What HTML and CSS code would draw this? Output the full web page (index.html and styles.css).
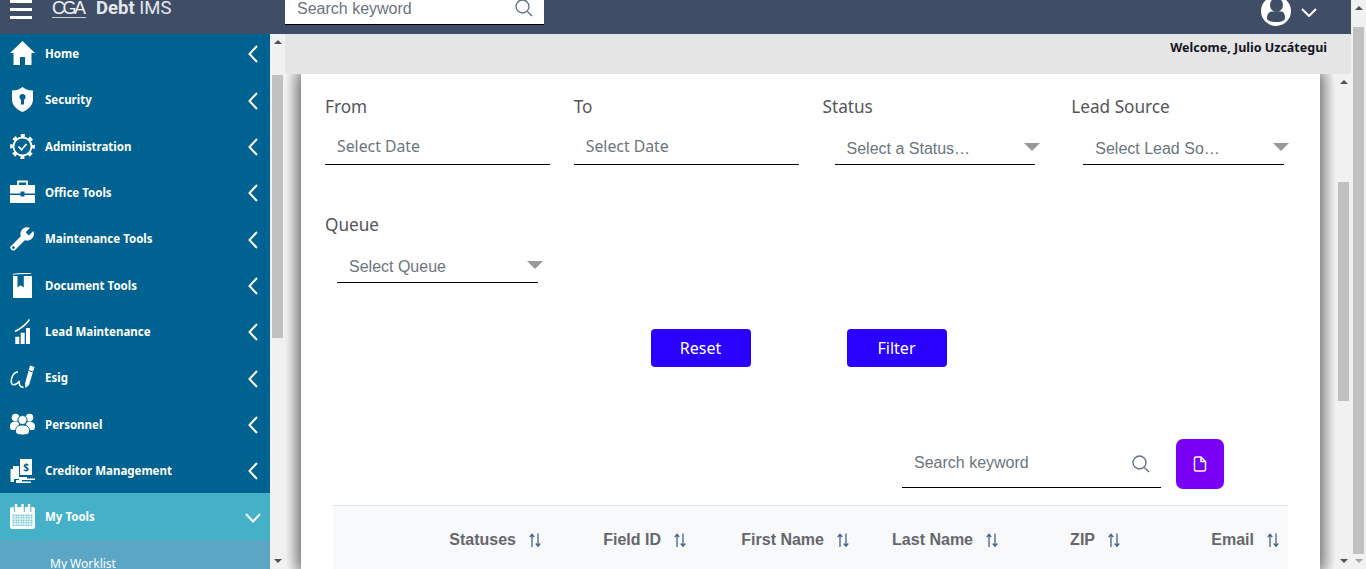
FILE: index.html
```html
<!DOCTYPE html>
<html>
    <head>
        <title>Debt IMS</title>
        <link rel="stylesheet" href="styles.css">
    </head>
    <body>
        <svg class="sprites" width="0" height="0">
            <symbol id="chev-left" viewBox="0 0 10 18"><path d="M9 1 1.500 9 9 17" fill="none" stroke="#fff" stroke-width="2"/></symbol>
            <symbol id="search" viewBox="0 0 18 18"><circle cx="7.500" cy="7.500" r="6.500" fill="none" stroke="#64748b" stroke-width="1.400"/><path d="M12.400 12.400 17 17" stroke="#64748b" stroke-width="1.400"/></symbol>
            <symbol id="sort" viewBox="0 0 12 14"><path d="M3 14V1.500M.8 4 3 1.200 5.200 4M9 .5V13M6.800 10.500 9 13.300l2.200-2.800" fill="none" stroke="#46608f" stroke-width="1.300"/></symbol>
        </svg>
        <div class="shell">
            <div class="main">
                <header class="topbar">
                    <div class="burger"><span></span><span></span><span></span></div>
                    <div class="logo">
                        <span class="logo-mark">CGA</span>
                        <span class="logo-line"></span>
                    </div>
                    <div class="brand"><b>Debt</b> IMS</div>
                    <div class="top-search">
                        <span>Search keyword</span>
                        <svg class="search-icon"><use href="#search"/></svg>
                    </div>
                    <svg class="avatar" viewBox="0 0 30 30">
                        <circle cx="15" cy="15" r="15" fill="#fff"/>
                        <ellipse cx="15.500" cy="9" rx="6.500" ry="7" fill="#3f4d67"/>
                        <path d="M6 22c0-5 3-6.500 5-6.500h9c2 0 4 1.500 4 6.500 0 2-2 4-9 4s-9-2-9-4z" fill="#3f4d67"/>
                    </svg>
                    <svg class="avatar-chev" viewBox="0 0 16 9"><path d="M1 1l7 7 7-7" fill="none" stroke="#fff" stroke-width="2"/></svg>
                </header>
                <div class="below">
                    <nav class="sidebar">
                        <a class="nav-item">
                            <svg class="nav-icon" viewBox="0 0 25 25"><path d="M12.500 0 25 12h-3.500v12h-6.500v-8H10v8H3.500V12H0z" fill="#fff"/></svg>
                            <span>Home</span>
                            <svg class="nav-chev"><use href="#chev-left"/></svg>
                        </a>
                        <a class="nav-item">
                            <svg class="nav-icon" viewBox="0 0 25 25"><path d="M12.500 0c3 2.500 6 3.500 10.500 3.500V12c0 6-4 10.500-10.500 13C6 22.500 2 18 2 12V3.500C6.500 3.500 9.500 2.500 12.500 0z" fill="#fff"/><circle cx="12.500" cy="10" r="3" fill="#006290"/><rect x="11" y="11" width="3" height="6.500" fill="#006290"/></svg>
                            <span>Security</span>
                            <svg class="nav-chev"><use href="#chev-left"/></svg>
                        </a>
                        <a class="nav-item">
                            <svg class="nav-icon" viewBox="0 0 25 25"><circle cx="12.500" cy="12.500" r="9" fill="none" stroke="#fff" stroke-width="1.800"/><circle cx="12.500" cy="12.500" r="10.800" fill="none" stroke="#fff" stroke-width="3.200" stroke-dasharray="4 4.480" stroke-dashoffset="2"/><path d="M8.500 12.500l3 3.200 5-5.700" fill="none" stroke="#fff" stroke-width="1.700"/></svg>
                            <span>Administration</span>
                            <svg class="nav-chev"><use href="#chev-left"/></svg>
                        </a>
                        <a class="nav-item">
                            <svg class="nav-icon" viewBox="0 0 25 25"><path d="M8 5V1.500h9V5" fill="none" stroke="#fff" stroke-width="1.800"/><path d="M0 5h25v8.500H14.500v-2h-4v2H0zM0 15h10.500v1.500h4V15H25v8H0z" fill="#fff"/></svg>
                            <span>Office Tools</span>
                            <svg class="nav-chev"><use href="#chev-left"/></svg>
                        </a>
                        <a class="nav-item">
                            <svg class="nav-icon" viewBox="0 0 24 24"><g transform="matrix(-1 0 0 1 24 0)"><path d="M22.700 19l-9.100-9.100c.9-2.300.4-5-1.500-6.900-2-2-5-2.400-7.400-1.300L9 6 6 9 1.600 4.700C.4 7.100.9 10.100 2.900 12.100c1.900 1.900 4.600 2.400 6.900 1.500l9.100 9.100c.4.4 1 .9 2 .9s3-2 3-3c0-.6-.8-1.300-1.200-1.600z" fill="#fff"/><circle cx="20.700" cy="20.700" r="1.300" fill="#006290"/></g></svg>
                            <span>Maintenance Tools</span>
                            <svg class="nav-chev"><use href="#chev-left"/></svg>
                        </a>
                        <a class="nav-item">
                            <svg class="nav-icon" viewBox="0 0 25 25"><path d="M3 1.500C4 .5 20 .5 21 .5" fill="none" stroke="#fff" stroke-width="1.200"/><path d="M3 3h19v22H4a1 1 0 0 1-1-1zM7.500 3v11.500l3-2.300 3.300 2.300V3z" fill="#fff" fill-rule="evenodd"/></svg>
                            <span>Document Tools</span>
                            <svg class="nav-chev"><use href="#chev-left"/></svg>
                        </a>
                        <a class="nav-item">
                            <svg class="nav-icon" viewBox="0 0 25 25"><path d="M5.300 17.700h4v7.300h-4zM10.700 13.700h4V25h-4zM16 9h4v16h-4z" fill="#fff"/><path d="M5 12.500C10 10 15 7 19.500 .5" fill="none" stroke="#fff" stroke-width="1.500"/></svg>
                            <span>Lead Maintenance</span>
                            <svg class="nav-chev"><use href="#chev-left"/></svg>
                        </a>
                        <a class="nav-item">
                            <svg class="nav-icon" viewBox="0 0 25 25"><path d="M8 7C3 7 .5 14 1.500 18c1 3 5 2 8-2-1 3 1 7 4 6" fill="none" stroke="#fff" stroke-width="1.600"/><path d="M20 .5l4.500 1.500-5.500 18-3.500 3-.5-4.500z" fill="#fff"/><path d="M18.800 5.500l4.500 1.500" stroke="#006290"/></svg>
                            <span>Esig</span>
                            <svg class="nav-chev"><use href="#chev-left"/></svg>
                        </a>
                        <a class="nav-item">
                            <svg class="nav-icon" viewBox="0 0 25 25"><circle cx="5.500" cy="5.500" r="3.800" fill="#fff"/><circle cx="19.500" cy="5.500" r="3.800" fill="#fff"/><path d="M0 14c0-3 2-4.500 5.500-4.500S9 11 9 14v4H2c-1.500 0-2-2-2-4zM16 14c0-3 1-4.500 3.500-4.500S25 11 25 14c0 2-.5 4-2 4h-7z" fill="#fff"/><circle cx="12.500" cy="8" r="4.500" fill="#fff" stroke="#006290"/><path d="M5.500 19c0-4 2.500-6 7-6s7 2 7 6c0 3-3 4-7 4s-7-1-7-4z" fill="#fff" stroke="#006290"/></svg>
                            <span>Personnel</span>
                            <svg class="nav-chev"><use href="#chev-left"/></svg>
                        </a>
                        <a class="nav-item">
                            <svg class="nav-icon" viewBox="0 0 25 25"><path d="M10 1h12v16H10z" fill="#fff"/><text class="dollar" x="16" y="12.500">$</text><path d="M3 8h6v13H4v3H.5V11H3z" fill="#fff"/><path d="M9 19h8v1.500h8V22H12v1.500h9V25H6v-3h3z" fill="#fff"/></svg>
                            <span>Creditor Management</span>
                            <svg class="nav-chev"><use href="#chev-left"/></svg>
                        </a>
                        <a class="nav-item active">
                            <svg class="nav-icon" viewBox="0 0 25 25">
                                <defs><pattern id="cal-grid" width="2.500" height="2.500" patternUnits="userSpaceOnUse"><rect width="2.500" height="2.500" fill="#fff"/><rect x=".5" y=".5" width="1.500" height="1.500" fill="#44b1c9"/></pattern></defs>
                                <rect y="3" width="25" height="22" rx="2" fill="#fff"/>
                                <rect x="2" y="10" width="21" height="12" fill="url(#cal-grid)"/>
                                <path d="M6 0v7M12.500 0v7M19 0v7" stroke="#fff" stroke-width="2.400"/>
                                <path d="M4.300 3v5M14.300 3v5M20.800 3v5" stroke="#44b1c9" stroke-width="1"/>
                            </svg>
                            <span>My Tools</span>
                            <svg class="nav-down" viewBox="0 0 16 10"><path d="M1 1l7 7.500L15 1" fill="none" stroke="#fff" stroke-width="2"/></svg>
                        </a>
                        <a class="nav-sub">My Worklist</a>
                    </nav>
                    <div class="scrollbar side-scroll">
                        <span class="arrow-up"></span>
                        <span class="thumb"></span>
                        <span class="arrow-down"></span>
                    </div>
                    <div class="content">
                        <div class="welcome">Welcome, Julio Uzcátegui</div>
                        <div class="content-row">
                            <main class="card">
                                <section class="filters">
                                    <div class="field">
                                        <label>From</label>
                                        <div class="date-input">Select Date</div>
                                    </div>
                                    <div class="field">
                                        <label>To</label>
                                        <div class="date-input">Select Date</div>
                                    </div>
                                    <div class="field">
                                        <label>Status</label>
                                        <div class="select-input"><span>Select a Status…</span><i class="caret"></i></div>
                                    </div>
                                    <div class="field">
                                        <label>Lead Source</label>
                                        <div class="select-input"><span>Select Lead So…</span><i class="caret"></i></div>
                                    </div>
                                    <div class="field">
                                        <label>Queue</label>
                                        <div class="select-input"><span>Select Queue</span><i class="caret"></i></div>
                                    </div>
                                </section>
                                <div class="actions">
                                    <button class="btn">Reset</button>
                                    <button class="btn">Filter</button>
                                </div>
                                <div class="table-tools">
                                    <div class="table-search">
                                        <span>Search keyword</span>
                                        <svg class="search-icon"><use href="#search"/></svg>
                                    </div>
                                    <button class="export-btn">
                                        <svg viewBox="0 0 14 16" width="14" height="16"><path d="M1.500 2.500a1.500 1.500 0 0 1 1.500-1.500h5l4.500 4.500v8a1.500 1.500 0 0 1-1.500 1.500H3a1.500 1.500 0 0 1-1.500-1.500zM8 1v4.500h4.500" fill="none" stroke="#fff" stroke-width="1.500"/></svg>
                                    </button>
                                </div>
                                <div class="table-head">
                                    <div class="th"><span>Statuses</span><svg class="sort"><use href="#sort"/></svg></div>
                                    <div class="th"><span>Field ID</span><svg class="sort"><use href="#sort"/></svg></div>
                                    <div class="th"><span>First Name</span><svg class="sort"><use href="#sort"/></svg></div>
                                    <div class="th"><span>Last Name</span><svg class="sort"><use href="#sort"/></svg></div>
                                    <div class="th"><span>ZIP</span><svg class="sort"><use href="#sort"/></svg></div>
                                    <div class="th"><span>Email</span><svg class="sort"><use href="#sort"/></svg></div>
                                </div>
                            </main>
                            <div class="scrollbar inner-scroll">
                                <span class="arrow-up"></span>
                                <span class="thumb"></span>
                                <span class="arrow-down"></span>
                            </div>
                        </div>
                    </div>
                </div>
            </div>
            <div class="scrollbar page-scroll">
                <span class="arrow-up"></span>
                <span class="thumb"></span>
                <span class="arrow-down faded"></span>
            </div>
        </div>
    </body>
</html>
```

FILE: styles.css
```css
html, body {
    height: 100%;
}
body {
    margin: 0;
    overflow: hidden;
    background: #fff;
    font-family: "Noto Sans", Arial, sans-serif;
}
.sprites {
    display: block;
    height: 0;
}
.shell {
    display: flex;
    height: 569px;
    overflow: hidden;
}
.main {
    flex: 1;
    min-width: 0;
    display: flex;
    flex-direction: column;
}

/* top bar */
.topbar {
    flex: none;
    height: 34px;
    background-color: #3f4d67;
    display: flex;
    align-items: flex-start;
    overflow: hidden;
}
.burger {
    width: 22px;
    margin-left: 10px;
    display: flex;
    flex-direction: column;
    gap: 5px;
}
.burger span {
    height: 3px;
    background: #fff;
}
.logo {
    width: 34px;
    margin-left: 20px;
    display: flex;
    flex-direction: column;
}
.logo-mark {
    font-family: "Liberation Sans", sans-serif;
    font-size: 18px;
    line-height: 17px;
    letter-spacing: -2.5px;
    color: #f2f4f7;
}
.logo-line {
    height: 1px;
    background: #c9ced8;
}
.brand {
    margin-left: 10px;
    width: 189px;
    font-family: Roboto, sans-serif;
    font-size: 18.5px;
    line-height: 17px;
    color: #e4e7ec;
}
.brand b {
    font-weight: 700;
}
.top-search {
    width: 259px;
    height: 25px;
    box-sizing: border-box;
    padding: 0 11px 0 12px;
    background: #fff;
    border-bottom: 1px solid #000;
    display: flex;
    justify-content: space-between;
    align-items: flex-start;
    font-family: "Liberation Sans", sans-serif;
    font-size: 16px;
    line-height: 17px;
    color: #6c757d;
}
.search-icon {
    width: 18px;
    height: 18px;
}
.top-search .search-icon {
    margin: -1px 0 0 0;
}
.avatar {
    width: 30px;
    height: 30px;
    margin: -4px 0 0 717px;
}
.avatar-chev {
    width: 16px;
    height: 9px;
    margin: 8px 0 0 10px;
}

/* sidebar */
.below {
    flex: 1;
    min-height: 0;
    display: flex;
}
.sidebar {
    flex: none;
    width: 270px;
    overflow: hidden;
    background-color: #006290;
}
.nav-item {
    height: 46.33px;
    display: flex;
    align-items: center;
    color: #fff;
    font-size: 11.5px;
    font-weight: 700;
}
.nav-item:first-child {
    margin-top: -3.7px;
}
.nav-item span {
    flex: 1;
}
.nav-item.active {
    height: 47px;
    margin-top: -0.3px;
    background-color: #44b1c9;
}
.nav-icon {
    width: 25px;
    height: 25px;
    margin: 0 10px;
}
.dollar {
    font-family: "Noto Sans", sans-serif;
    font-size: 10px;
    font-weight: 700;
    text-anchor: middle;
    fill: #006290;
}
.nav-chev {
    width: 10px;
    height: 18px;
    margin: 2px 12px 0 0;
}
.nav-down {
    width: 16px;
    height: 10px;
    margin: 2px 9px 0 0;
}
.nav-sub {
    display: block;
    height: 46px;
    padding: 15px 0 0 50px;
    box-sizing: border-box;
    background-color: #5ba5c5;
    color: #fff;
    font-size: 12px;
    line-height: 18px;
}

/* fake scrollbars, they are part of the shot */
.scrollbar {
    flex: none;
    width: 15px;
    box-sizing: border-box;
    padding: 0 2px;
    background-color: #f1f1f1;
    display: flex;
    flex-direction: column;
    align-items: center;
}
.thumb {
    width: 11px;
    background-color: #c1c1c1;
}
.arrow-up, .arrow-down {
    flex: none;
    width: 0;
    height: 0;
    border-left: 4px solid transparent;
    border-right: 4px solid transparent;
}
.arrow-up {
    border-bottom: 4px solid #505050;
    margin-top: 6px;
}
.arrow-down {
    border-top: 4px solid #505050;
    margin-top: auto;
    margin-bottom: 6px;
}
.arrow-down.faded {
    border-top-color: #a3a3a3;
}
.page-scroll .thumb {
    margin-top: 17px;
    height: 527px;
}
.side-scroll .thumb {
    margin-top: 31px;
    height: 263px;
}
.inner-scroll .thumb {
    margin-top: 98px;
    height: 219px;
}

/* content */
.content {
    flex: 1;
    min-width: 0;
    display: flex;
    flex-direction: column;
}
.welcome {
    flex: none;
    height: 40px;
    box-sizing: border-box;
    padding: 5px 24px 0 0;
    background-color: #e5e5e5;
    text-align: right;
    font-size: 12.5px;
    line-height: 17px;
    font-weight: 700;
    color: #14141e;
}
.content-row {
    flex: 1;
    min-height: 0;
    display: flex;
}
.card {
    flex: 1;
    min-width: 0;
    margin: 0 16px;
    background: #fff;
    box-shadow: 0 0 16px 5px rgba(0, 0, 0, 0.6);
    clip-path: inset(0 -16px 0 -16px);
}

/* filters */
.filters {
    display: grid;
    grid-template-columns: repeat(4, 1fr);
    row-gap: 47px;
    padding: 20px 12px 0;
}
.field {
    height: 71px;
    padding: 0 12px;
    display: flex;
    flex-direction: column;
}
.field label {
    height: 24px;
    font-size: 17.2px;
    line-height: 26px;
    color: #55555a;
}
.date-input {
    height: 47px;
    box-sizing: border-box;
    padding: 16px 0 0 12px;
    border-bottom: 1px solid #000;
    font-size: 15.8px;
    line-height: 24px;
    color: #6c757d;
}
.select-input {
    width: 200.5px;
    height: 47px;
    margin-left: 12px;
    box-sizing: border-box;
    padding: 19px 0 0 12px;
    border-bottom: 1px solid #000;
    display: flex;
    justify-content: space-between;
    font-family: "Liberation Sans", sans-serif;
    font-size: 16px;
    line-height: 24px;
    color: #6c757d;
}
.caret {
    width: 0;
    height: 0;
    margin: 6px -5px 0 0;
    border-left: 8px solid transparent;
    border-right: 8px solid transparent;
    border-top: 8px solid #999;
}
.actions {
    margin-top: 46px;
    padding-right: 24px;
    display: flex;
    justify-content: center;
    gap: 96px;
}
.btn {
    width: 100px;
    height: 38px;
    border: none;
    border-radius: 4px;
    background-color: #2a00ff;
    color: #fff;
    font-family: "Noto Sans", sans-serif;
    font-size: 16px;
}

/* table */
.table-tools {
    margin-top: 72px;
    padding-right: 96px;
    display: flex;
    justify-content: flex-end;
    gap: 15px;
}
.table-search {
    width: 259px;
    height: 49px;
    box-sizing: border-box;
    padding: 12px 11px 0 12px;
    border-bottom: 1px solid #000;
    display: flex;
    justify-content: space-between;
    font-family: "Liberation Sans", sans-serif;
    font-size: 16px;
    line-height: 24px;
    color: #6c757d;
}
.table-search .search-icon {
    margin-top: 4px;
}
.export-btn {
    width: 48px;
    height: 50px;
    border: none;
    border-radius: 7px;
    padding: 0;
    background-color: #7a00f5;
    display: flex;
    align-items: center;
    justify-content: center;
}
.table-head {
    margin: 16px 32px 0;
    height: 66px;
    border-top: 1px solid #dee2e6;
    background-color: #f8f9fa;
    display: grid;
    grid-template-columns: 216px 145px 163px 149px 122px 159px;
}
.th {
    padding: 24px 8px 0 0;
    display: flex;
    justify-content: flex-end;
    align-items: flex-start;
    gap: 13px;
    font-family: "Liberation Sans", sans-serif;
    font-size: 16px;
    line-height: 20px;
    font-weight: 700;
    color: #66666c;
}
.sort {
    width: 12px;
    height: 14px;
    margin-top: 3px;
}
```
